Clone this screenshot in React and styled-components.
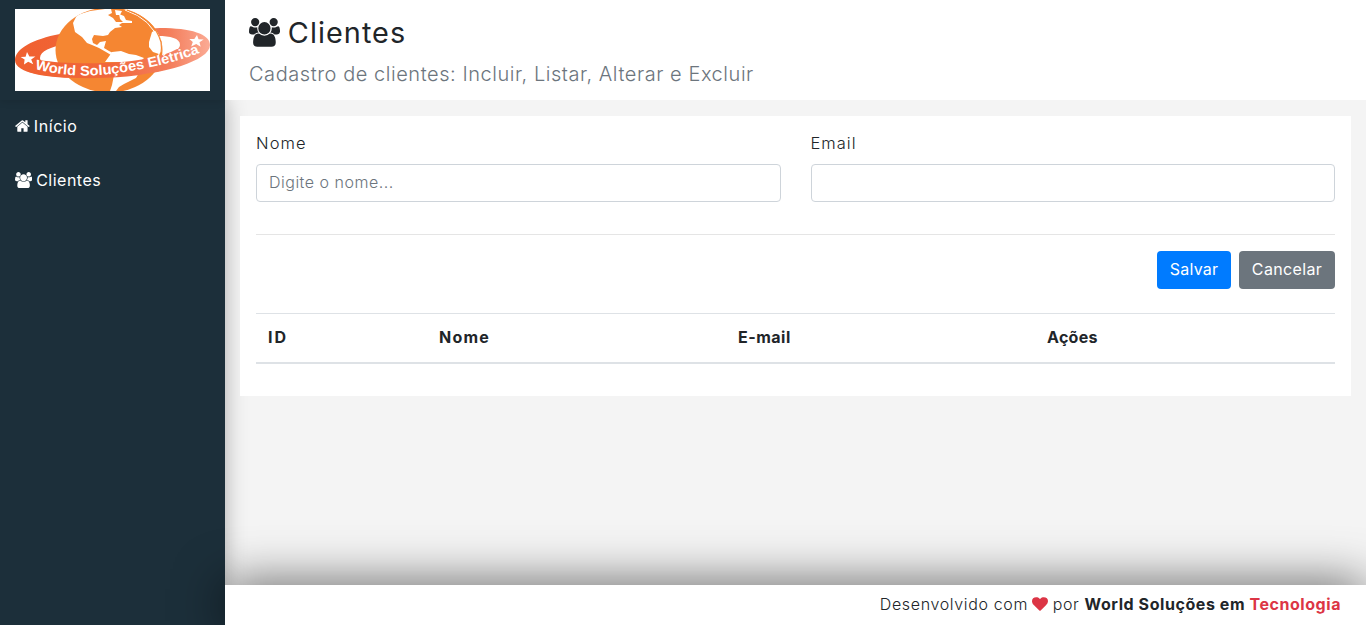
import React from "react";
import styled, { createGlobalStyle } from "styled-components";

const Global = createGlobalStyle`
  * { box-sizing: border-box; }
  body {
    margin: 0;
    font-family: Inter, "Open Sans", sans-serif;
    font-size: 16px;
    line-height: 24px;
    color: #212529;
    overflow: hidden;
  }
`;

const Page = styled.div`
  display: grid;
  grid-template-columns: 225px 1fr;
  grid-template-rows: 100px 1fr 40px;
  grid-template-areas: "logo header" "menu content" "menu footer";
  height: 100vh;
  background: #f4f4f4;
`;

const LogoArea = styled.aside`
  grid-area: logo;
  display: flex;
  align-items: center;
  justify-content: center;
  background: #1c2f3a;
  box-shadow: 0 1px 8px rgba(0, 0, 0, 0.12);
`;

const Menu = styled.aside`
  grid-area: menu;
  background: #1c2f3a;
  box-shadow: 0 0 20px rgba(0, 0, 0, 0.3);
`;

const MenuLink = styled.a`
  display: flex;
  align-items: center;
  gap: 4px;
  height: 54px;
  padding: 0 15px;
  color: #fff;
  text-decoration: none;
`;

const Header = styled.header`
  grid-area: header;
  position: relative;
  display: flex;
  flex-direction: column;
  padding: 15px 24px 0;
  background: #fff;
`;

const Title = styled.h1`
  display: flex;
  align-items: center;
  gap: 8px;
  margin: 0;
  font-size: 28.8px;
  line-height: 35px;
  font-weight: 400;
`;

const Subtitle = styled.p`
  margin: 9px 0 0;
  font-size: 20px;
  line-height: 30px;
  font-weight: 300;
  color: #6c757d;
`;

const Text = styled.span`
  letter-spacing: ${(p) => p.$track || "0"};
  white-space: nowrap;
  padding-bottom: ${(p) => p.$lift || "0"};
`;

const Content = styled.main`
  grid-area: content;
  padding: 16px 15px;
`;

const Card = styled.section`
  position: relative;
  padding: 16px;
  background: #fff;
`;

const Fields = styled.div`
  display: grid;
  grid-template-columns: 1fr 1fr;
  gap: 30px;
`;

const Label = styled.label`
  display: block;
  margin-bottom: 10px;
  line-height: 22px;
  font-size: 16.5px;
  font-weight: 300;
  letter-spacing: ${(p) => p.$track};
`;

const Input = styled.input`
  display: block;
  width: 100%;
  height: 38px;
  padding: 5px 12px 7px;
  border: 1px solid #ced4da;
  border-radius: 4px;
  font: inherit;
  font-weight: 300;
  letter-spacing: 0.5px;
  &::placeholder { color: #6c757d; opacity: 1; }
`;

const Divider = styled.hr`
  margin: 32px 0 16px;
  border: 0;
  border-top: 1px solid rgba(0, 0, 0, 0.1);
`;

const Actions = styled.div`
  display: flex;
  justify-content: flex-end;
  gap: 8px;
`;

const Button = styled.button`
  width: ${(p) => p.$width};
  height: 38px;
  padding: 0 0 2px;
  border: 0;
  border-radius: 4px;
  background: ${(p) => p.$color};
  color: #fff;
  font: inherit;
  letter-spacing: ${(p) => p.$track};
`;

const Table = styled.table`
  width: 100%;
  margin: 24px 0 16px;
  table-layout: fixed;
  border-collapse: separate;
  border-spacing: 0;
`;

const Th = styled.th`
  width: ${(p) => p.$width};
  padding: 11px 12px 13px;
  border-top: 1px solid #dee2e6;
  border-bottom: 2px solid #dee2e6;
  text-align: left;
  font-weight: 700;
  letter-spacing: ${(p) => p.$track};
`;

const Footer = styled.footer`
  grid-area: footer;
  position: relative;
  display: flex;
  align-items: center;
  justify-content: flex-end;
  padding: 0 25px 2px;
  background: #fff;
  font-weight: 300;
  box-shadow: 0 0 50px rgba(0, 0, 0, 0.67);
  strong { font-weight: 700; }
`;

const Accent = styled.strong`
  color: #dc3545;
  letter-spacing: ${(p) => p.$track};
`;

const Glyph = styled.svg`
  display: block;
  flex: none;
  fill: ${(p) => p.$color || "currentColor"};
  margin: ${(p) => p.$margin || "0"};
`;

const UsersIcon = ({ size, margin }) => (
  <Glyph width={(size * 1920) / 1792} height={size} viewBox="0 0 1920 1792" $margin={margin}>
    <path d="M593 896q-162 5-265 128H194q-82 0-138-40.5T0 865q0-353 124-353 6 0 43.5 21t97.5 42.5T384 597q67 0 133-23-5 37-5 66 0 159 93 256zm1071 637q0 120-73 189.5t-194 69.5H523q-121 0-194-69.5T256 1533q0-53 3.5-103.5t14-109T300 1212t43-97.5 62-81 85.5-53.5T602 960q10 0 43 21.5t73 48 107 48 135 21.5 135-21.5 107-48 73-48 43-21.5q61 0 111.5 20t85.5 53.5 62 81 43 97.5 26.5 108.5 14 109 3.5 103.5zM640 256q0 106-75 181t-181 75-181-75-75-181 75-181T384 0t181 75 75 181zm704 384q0 159-112.5 271.5T960 1024 688.5 911.5 576 640t112.5-271.5T960 256t271.5 112.5T1344 640zm576 225q0 78-56 118.5t-138 40.5h-134q-103-123-265-128 93-97 93-256 0-29-5-66 66 23 133 23 59 0 119-21.5t97.5-42.5 43.5-21q124 0 124 353zm-128-609q0 106-75 181t-181 75-181-75-75-181 75-181 181-75 181 75 75 181z" />
  </Glyph>
);

const HomeIcon = () => (
  <Glyph width="14.86" height="16" viewBox="0 0 1664 1792" $margin="0 0 2px">
    <path d="M1408 992v480q0 26-19 45t-45 19H960v-384H704v384H320q-26 0-45-19t-19-45V992q0-1 .5-3t.5-3l575-474 575 474q1 2 1 6zm223-69l-62 74q-8 9-21 11h-3q-13 0-21-7L832 424l-692 577q-12 8-24 7-13-2-21-11l-62-74q-8-10-7-23.5T37 878L756 279q32-26 76-26t76 26l244 204V288q0-14 9-23t23-9h192q14 0 23 9t9 23v408l219 182q10 8 11 21.5t-7 23.5z" />
  </Glyph>
);

const HeartIcon = () => (
  <Glyph $color="#dc3545" $margin="0 5px 0 3.5px" width="16" height="16" viewBox="0 0 1792 1792">
    <path d="M896 1664q-26 0-44-18l-624-602q-10-8-27.5-26T145 952.5 77 855 23.5 734 0 596q0-220 127-344t351-124q62 0 126.5 21.5t120 58T820 276t76 68q36-36 76-68t95.5-68.5 120-58T1314 128q224 0 351 124t127 344q0 221-229 450l-623 600q-18 18-44 18z" />
  </Glyph>
);

const Logo = () => (
  <svg width="195" height="82" viewBox="0 0 195 82">
    <defs>
      <linearGradient id="ring" gradientUnits="userSpaceOnUse" x1="0" x2="195" y1="0" y2="0">
        <stop offset="0" stopColor="#f0602f" />
        <stop offset="0.5" stopColor="#f1673c" />
        <stop offset="0.8" stopColor="#f47f5d" />
        <stop offset="1" stopColor="#fbab95" />
      </linearGradient>
      <clipPath id="globe"><ellipse cx="94" cy="41" rx="53.5" ry="42.5" /></clipPath>
      <path id="arc" d="M20 60 C45 67 75 68 100 64.5 C130 60 160 54 189 42" />
    </defs>
    <rect width="195" height="82" fill="#fff" />
    <path fill="url(#ring)" fillRule="evenodd" d="M0 51 C0 40 18 30 45 25 L145 19 C176 19 195 25 195 36 C195 52 148 65 105 68 C57 71 0 69 0 51Z M25 49 C25 56 43 55 71 55 C117 57 165 47 165 36 C165 29 155 27 143 27 L50 35 C36 38 25 42 25 49Z" />
    <ellipse cx="94" cy="41" rx="53.5" ry="42.5" fill="#f58632" />
    <g clipPath="url(#globe)" fill="#fff">
      <path d="M58 14 L62 6 L75 2 L90 0 L96 0 L97 4 L93 6 L98 9 L101 13 L108 13 L105 10 L104 5 L109 7 L111 11 L117 12 L117 14 L107 14 L104 16 L107 18 L100 19 L95 23 L93 26 L88 27 L79 26 L77 30 L78 34 L82 36 L85 33 L91 32 L89 39 L94 42 L98 44 L96 46 L91 43 L84 39 L77 36 L72 34 L67 28 L60 23Z" />
      <path d="M100 1 L107 2 L105 6 L101 6Z M90 53 L95 46 L97 43 L106 42 L114 45 L121 46 L129 49 L125 53Z" />
      <path d="M99 66 L124 64 L121 69 L115 72 L109 75 L104 78 L101 82 L95 82 L97 76Z" />
      <path d="M134 33 L137 23 L141 21 L146 29 L147 42 L144 45 L138 43 L134 38Z" />
    </g>
    <path fill="none" stroke="#fff" strokeWidth="1" d="M110 1 Q137 10 144 33 Q146 46 140 55" />
    <path fill="none" stroke="#f58632" strokeWidth="1.2" d="M112 1 Q139 10 146 33 Q148 46 142 55" />
    <path fill="url(#ring)" d="M24 51 C48 55 96 56 130 50 Q152 46 162 40 L188 40 C176 54 147 64 112 67.5 C72 71 35 69 14 63Z" />
    <path fill="#fff" d="M12 43l2.4 4.5 6-.1-4.2 3.1 2 4.7-5-2.4-4.2 2.8.6-5-4-2.5 5-.4zM182 26l1.5 4.2 5.2.2-4.2 2.8 1.2 4.5-4.5-2.6-5 2.3 1.6-4.4-3.5-3 5-.1z" />
    <text fill="#fff" fontFamily="Liberation Sans" fontSize="14" fontWeight="700">
      <textPath href="#arc" textLength="168" lengthAdjust="spacingAndGlyphs">World Soluções Elétrica</textPath>
    </text>
  </svg>
);

export default function App() {
  return (
    <>
      <Global />
      <Page>
        <Menu>
          <MenuLink><HomeIcon /><Text $track="0.55px" $lift="2px">Início</Text></MenuLink>
          <MenuLink><UsersIcon size={16} margin="0 0 2px" /><Text $track="0.5px" $lift="2px">Clientes</Text></MenuLink>
        </Menu>
        <LogoArea><Logo /></LogoArea>
        <Header>
          <Title><UsersIcon size={28.8} /><Text $track="1.05px">Clientes</Text></Title>
          <Subtitle><Text $track="0.55px">Cadastro de clientes: Incluir, Listar, Alterar e Excluir</Text></Subtitle>
        </Header>
        <Content>
          <Card>
            <Fields>
              <div><Label $track="1.1px">Nome</Label><Input placeholder="Digite o nome..." /></div>
              <div><Label $track="1px">Email</Label><Input /></div>
            </Fields>
            <Divider />
            <Actions>
              <Button $color="#007bff" $width="74px" $track="0.2px">Salvar</Button>
              <Button $color="#6c757d" $width="96px" $track="0.35px">Cancelar</Button>
            </Actions>
            <Table>
              <thead>
                <tr>
                  <Th $width="171px" $track="2px">ID</Th>
                  <Th $width="299px" $track="1.2px">Nome</Th>
                  <Th $width="309px" $track="0.5px">E-mail</Th>
                  <Th $track="0.3px">Ações</Th>
                </tr>
              </thead>
              <tbody />
            </Table>
          </Card>
        </Content>
        <Footer>
          <Text $track="0.65px">Desenvolvido com</Text>
          <HeartIcon />
          <Text $track="0.65px">por&nbsp;</Text>
          <strong><Text $track="0.57px">World Soluções em&nbsp;</Text></strong>
          <Accent $track="0.55px">Tecnologia</Accent>
        </Footer>
      </Page>
    </>
  );
}
